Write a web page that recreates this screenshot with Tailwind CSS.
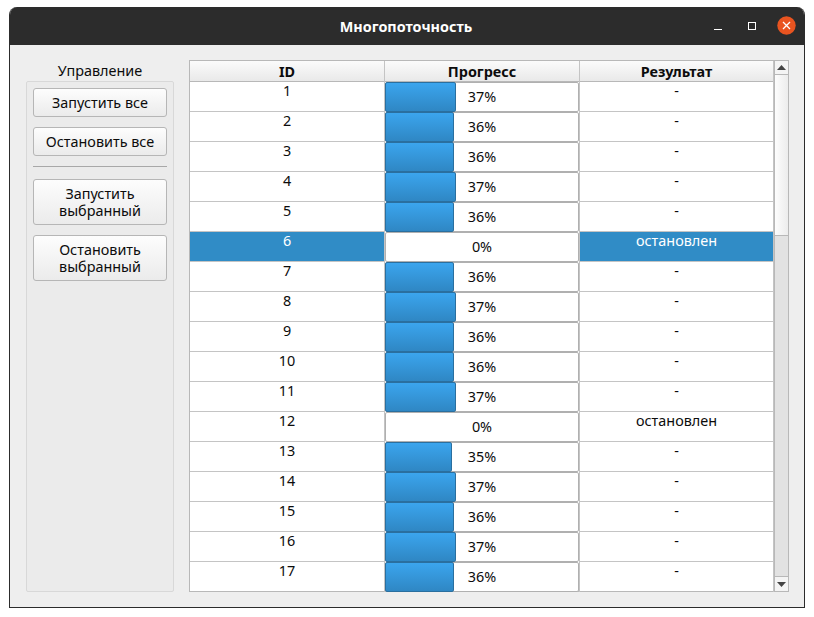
<!DOCTYPE html>
<html lang="ru">
<head>
<meta charset="utf-8">
<script src="https://cdn.jsdelivr.net/npm/@tailwindcss/browser@4"></script>
</head>
<body class="bg-white h-[617px] w-[814px] overflow-hidden font-['Noto_Sans',sans-serif] text-[14.4px] text-[#0c0c0c]">
<div class="ml-[9px] mt-[7px] w-[796px] h-[601px] flex flex-col border-x border-b border-[#2c2c2c] rounded-t-[8px] bg-[#eeeeee] overflow-hidden">
  <header class="h-[38px] shrink-0 bg-[#2c2c2c] relative flex items-center justify-center text-white font-bold text-[14.4px]">
    <span class="relative top-[1px] left-[-1px]">Многопоточность</span>
    <div class="absolute right-[8px] top-[9px] flex items-center">
      <svg width="10" height="10" viewBox="0 0 10 10"><path d="M1 8.5h8" stroke="#fff" stroke-width="1"/></svg>
      <svg width="10" height="10" viewBox="0 0 10 10" class="ml-[24px]"><rect x="1.5" y="1.5" width="7" height="7" fill="none" stroke="#fff" stroke-width="1"/></svg>
      <svg width="19" height="19" viewBox="0 0 19 19" class="ml-[20px]"><circle cx="9.5" cy="9.5" r="9.2" fill="#e95420"/><path d="M6 6l7 7M13 6l-7 7" stroke="#fff" stroke-width="1.3"/></svg>
    </div>
  </header>
  <main class="flex pl-[16px] pt-[15px]">
    <aside class="w-[148px] mr-[15px] flex flex-col">
      <div class="h-[21px] text-center leading-[21px] shrink-0">Управление</div>
      <div class="h-[511px] bg-[#ebebeb] border border-[#d8d8d8] rounded-[2px] px-[6px] pt-[6px] flex flex-col">
        <button class="h-[29px] shrink-0 border border-[#b6b6b6] rounded-[3px] bg-linear-to-b from-[#fdfdfd] to-[#ebebeb]">Запустить все</button>
        <button class="h-[29px] mt-[10px] shrink-0 border border-[#b6b6b6] rounded-[3px] bg-linear-to-b from-[#fdfdfd] to-[#ebebeb]">Остановить все</button>
        <div class="h-[1px] mt-[10px] shrink-0 bg-[#a8a8a8]"></div>
        <button class="h-[46px] mt-[12px] shrink-0 leading-[17px] border border-[#b6b6b6] rounded-[3px] bg-linear-to-b from-[#fdfdfd] to-[#ebebeb]">Запустить<br>выбранный</button>
        <button class="h-[46px] mt-[10px] shrink-0 leading-[17px] border border-[#b6b6b6] rounded-[3px] bg-linear-to-b from-[#fdfdfd] to-[#ebebeb]">Остановить<br>выбранный</button>
      </div>
    </aside>
    <section class="w-[600px] h-[532px] border border-[#b8b8b8] flex bg-white">
      <div class="w-[584px] flex flex-col">
        <div class="grid grid-cols-[195px_195px_194px] h-[21px] border-b border-[#b8b8b8] bg-linear-to-b from-[#fbfbfb] to-[#e9e9e9] font-bold leading-[21px] text-center">
          <div class="border-r border-[#c4c4c4]">ID</div>
          <div class="border-r border-[#c4c4c4]">Прогресс</div>
          <div class="border-r border-[#c4c4c4]">Результат</div>
        </div>
        <div class="grid grid-cols-[195px_195px_194px] auto-rows-[30px] text-center">
          <div class="border-r border-b border-[#c4c4c4] leading-[17px]">1</div>
          <div class="border-r border-[#c4c4c4] h-[30px]"><div class="h-full border border-[#b0b0b0] rounded-[2px] bg-white relative leading-[28px]"><div class="absolute -left-px -top-px -bottom-px w-[71px] rounded-[2px] bg-linear-to-b from-[#3ba5ee] to-[#2f87c4] border border-[#2a6f9f]"></div><span class="relative">37%</span></div></div>
          <div class="border-r border-b border-[#c4c4c4] leading-[17px]">-</div>

          <div class="border-r border-b border-[#c4c4c4] leading-[17px]">2</div>
          <div class="border-r border-[#c4c4c4] h-[30px]"><div class="h-full border border-[#b0b0b0] rounded-[2px] bg-white relative leading-[28px]"><div class="absolute -left-px -top-px -bottom-px w-[69px] rounded-[2px] bg-linear-to-b from-[#3ba5ee] to-[#2f87c4] border border-[#2a6f9f]"></div><span class="relative">36%</span></div></div>
          <div class="border-r border-b border-[#c4c4c4] leading-[17px]">-</div>

          <div class="border-r border-b border-[#c4c4c4] leading-[17px]">3</div>
          <div class="border-r border-[#c4c4c4] h-[30px]"><div class="h-full border border-[#b0b0b0] rounded-[2px] bg-white relative leading-[28px]"><div class="absolute -left-px -top-px -bottom-px w-[69px] rounded-[2px] bg-linear-to-b from-[#3ba5ee] to-[#2f87c4] border border-[#2a6f9f]"></div><span class="relative">36%</span></div></div>
          <div class="border-r border-b border-[#c4c4c4] leading-[17px]">-</div>

          <div class="border-r border-b border-[#c4c4c4] leading-[17px]">4</div>
          <div class="border-r border-[#c4c4c4] h-[30px]"><div class="h-full border border-[#b0b0b0] rounded-[2px] bg-white relative leading-[28px]"><div class="absolute -left-px -top-px -bottom-px w-[71px] rounded-[2px] bg-linear-to-b from-[#3ba5ee] to-[#2f87c4] border border-[#2a6f9f]"></div><span class="relative">37%</span></div></div>
          <div class="border-r border-b border-[#c4c4c4] leading-[17px]">-</div>

          <div class="border-r border-b border-[#c4c4c4] leading-[17px]">5</div>
          <div class="border-r border-[#c4c4c4] h-[30px]"><div class="h-full border border-[#b0b0b0] rounded-[2px] bg-white relative leading-[28px]"><div class="absolute -left-px -top-px -bottom-px w-[69px] rounded-[2px] bg-linear-to-b from-[#3ba5ee] to-[#2f87c4] border border-[#2a6f9f]"></div><span class="relative">36%</span></div></div>
          <div class="border-r border-b border-[#c4c4c4] leading-[17px]">-</div>

          <div class="border-r border-b border-[#c4c4c4] leading-[17px] bg-[#308cc6] text-white">6</div>
          <div class="border-r border-[#c4c4c4] h-[30px]"><div class="h-full border border-[#b0b0b0] rounded-[2px] bg-white relative leading-[28px]"><span class="relative">0%</span></div></div>
          <div class="border-r border-b border-[#c4c4c4] leading-[17px] bg-[#308cc6] text-white">остановлен</div>

          <div class="border-r border-b border-[#c4c4c4] leading-[17px]">7</div>
          <div class="border-r border-[#c4c4c4] h-[30px]"><div class="h-full border border-[#b0b0b0] rounded-[2px] bg-white relative leading-[28px]"><div class="absolute -left-px -top-px -bottom-px w-[69px] rounded-[2px] bg-linear-to-b from-[#3ba5ee] to-[#2f87c4] border border-[#2a6f9f]"></div><span class="relative">36%</span></div></div>
          <div class="border-r border-b border-[#c4c4c4] leading-[17px]">-</div>

          <div class="border-r border-b border-[#c4c4c4] leading-[17px]">8</div>
          <div class="border-r border-[#c4c4c4] h-[30px]"><div class="h-full border border-[#b0b0b0] rounded-[2px] bg-white relative leading-[28px]"><div class="absolute -left-px -top-px -bottom-px w-[71px] rounded-[2px] bg-linear-to-b from-[#3ba5ee] to-[#2f87c4] border border-[#2a6f9f]"></div><span class="relative">37%</span></div></div>
          <div class="border-r border-b border-[#c4c4c4] leading-[17px]">-</div>

          <div class="border-r border-b border-[#c4c4c4] leading-[17px]">9</div>
          <div class="border-r border-[#c4c4c4] h-[30px]"><div class="h-full border border-[#b0b0b0] rounded-[2px] bg-white relative leading-[28px]"><div class="absolute -left-px -top-px -bottom-px w-[69px] rounded-[2px] bg-linear-to-b from-[#3ba5ee] to-[#2f87c4] border border-[#2a6f9f]"></div><span class="relative">36%</span></div></div>
          <div class="border-r border-b border-[#c4c4c4] leading-[17px]">-</div>

          <div class="border-r border-b border-[#c4c4c4] leading-[17px]">10</div>
          <div class="border-r border-[#c4c4c4] h-[30px]"><div class="h-full border border-[#b0b0b0] rounded-[2px] bg-white relative leading-[28px]"><div class="absolute -left-px -top-px -bottom-px w-[69px] rounded-[2px] bg-linear-to-b from-[#3ba5ee] to-[#2f87c4] border border-[#2a6f9f]"></div><span class="relative">36%</span></div></div>
          <div class="border-r border-b border-[#c4c4c4] leading-[17px]">-</div>

          <div class="border-r border-b border-[#c4c4c4] leading-[17px]">11</div>
          <div class="border-r border-[#c4c4c4] h-[30px]"><div class="h-full border border-[#b0b0b0] rounded-[2px] bg-white relative leading-[28px]"><div class="absolute -left-px -top-px -bottom-px w-[71px] rounded-[2px] bg-linear-to-b from-[#3ba5ee] to-[#2f87c4] border border-[#2a6f9f]"></div><span class="relative">37%</span></div></div>
          <div class="border-r border-b border-[#c4c4c4] leading-[17px]">-</div>

          <div class="border-r border-b border-[#c4c4c4] leading-[17px]">12</div>
          <div class="border-r border-[#c4c4c4] h-[30px]"><div class="h-full border border-[#b0b0b0] rounded-[2px] bg-white relative leading-[28px]"><span class="relative">0%</span></div></div>
          <div class="border-r border-b border-[#c4c4c4] leading-[17px]">остановлен</div>

          <div class="border-r border-b border-[#c4c4c4] leading-[17px]">13</div>
          <div class="border-r border-[#c4c4c4] h-[30px]"><div class="h-full border border-[#b0b0b0] rounded-[2px] bg-white relative leading-[28px]"><div class="absolute -left-px -top-px -bottom-px w-[67px] rounded-[2px] bg-linear-to-b from-[#3ba5ee] to-[#2f87c4] border border-[#2a6f9f]"></div><span class="relative">35%</span></div></div>
          <div class="border-r border-b border-[#c4c4c4] leading-[17px]">-</div>

          <div class="border-r border-b border-[#c4c4c4] leading-[17px]">14</div>
          <div class="border-r border-[#c4c4c4] h-[30px]"><div class="h-full border border-[#b0b0b0] rounded-[2px] bg-white relative leading-[28px]"><div class="absolute -left-px -top-px -bottom-px w-[71px] rounded-[2px] bg-linear-to-b from-[#3ba5ee] to-[#2f87c4] border border-[#2a6f9f]"></div><span class="relative">37%</span></div></div>
          <div class="border-r border-b border-[#c4c4c4] leading-[17px]">-</div>

          <div class="border-r border-b border-[#c4c4c4] leading-[17px]">15</div>
          <div class="border-r border-[#c4c4c4] h-[30px]"><div class="h-full border border-[#b0b0b0] rounded-[2px] bg-white relative leading-[28px]"><div class="absolute -left-px -top-px -bottom-px w-[69px] rounded-[2px] bg-linear-to-b from-[#3ba5ee] to-[#2f87c4] border border-[#2a6f9f]"></div><span class="relative">36%</span></div></div>
          <div class="border-r border-b border-[#c4c4c4] leading-[17px]">-</div>

          <div class="border-r border-b border-[#c4c4c4] leading-[17px]">16</div>
          <div class="border-r border-[#c4c4c4] h-[30px]"><div class="h-full border border-[#b0b0b0] rounded-[2px] bg-white relative leading-[28px]"><div class="absolute -left-px -top-px -bottom-px w-[71px] rounded-[2px] bg-linear-to-b from-[#3ba5ee] to-[#2f87c4] border border-[#2a6f9f]"></div><span class="relative">37%</span></div></div>
          <div class="border-r border-b border-[#c4c4c4] leading-[17px]">-</div>

          <div class="border-r border-[#c4c4c4] leading-[17px]">17</div>
          <div class="border-r border-[#c4c4c4] h-[30px]"><div class="h-full border border-[#b0b0b0] rounded-[2px] bg-white relative leading-[28px]"><div class="absolute -left-px -top-px -bottom-px w-[69px] rounded-[2px] bg-linear-to-b from-[#3ba5ee] to-[#2f87c4] border border-[#2a6f9f]"></div><span class="relative">36%</span></div></div>
          <div class="border-r border-[#c4c4c4] leading-[17px]">-</div>
        </div>
      </div>
      <div class="w-[14px] flex flex-col border-l border-[#b8b8b8] bg-[#e2e2e2]">
        <div class="h-[14px] border-b border-[#b8b8b8] bg-[#f4f4f4] flex items-center justify-center"><svg width="9" height="5" viewBox="0 0 9 5"><path d="M4.5 0L9 5H0z" fill="#444"/></svg></div>
        <div class="h-[161px] border-b border-[#b8b8b8] bg-linear-to-r from-[#fdfdfd] to-[#ececec]"></div>
        <div class="flex-1"></div>
        <div class="h-[15px] border-t border-[#b8b8b8] bg-[#f4f4f4] flex items-center justify-center"><svg width="9" height="5" viewBox="0 0 9 5"><path d="M0 0H9L4.5 5z" fill="#444"/></svg></div>
      </div>
    </section>
  </main>
</div>
</body>
</html>
